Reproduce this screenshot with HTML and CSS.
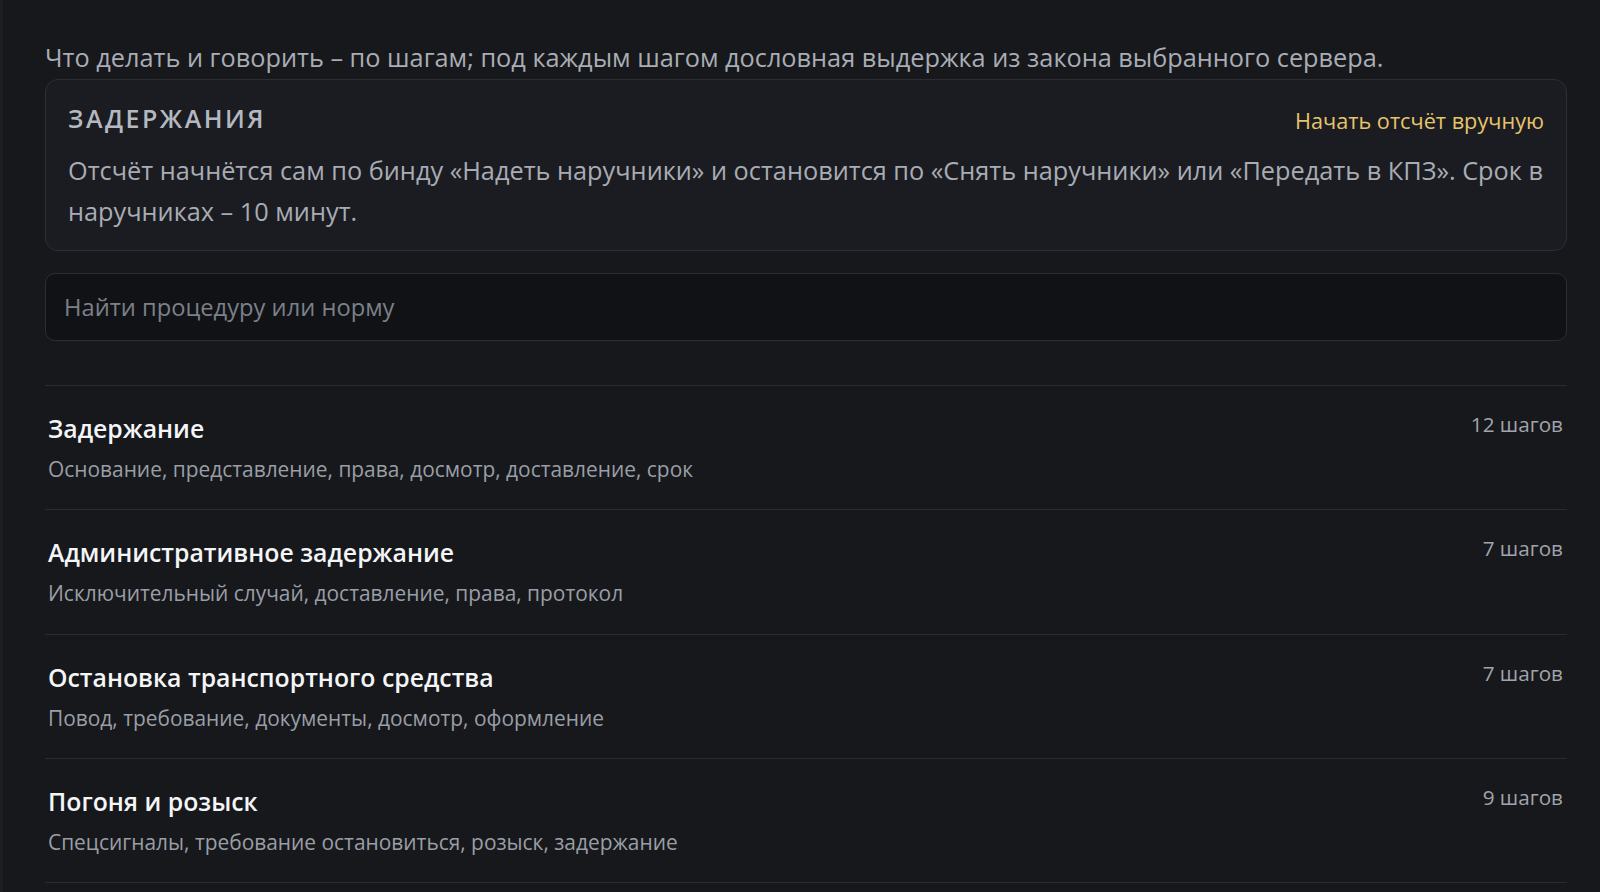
FILE: index.html
```html
<!DOCTYPE html>
<html lang="ru">
<head>
<meta charset="utf-8">
<title>Процедуры</title>
<link rel="stylesheet" href="styles.css">
</head>
<body>
<div class="app">
  <div class="edge"></div>
  <main class="main">
    <p class="intro">Что делать и говорить – по шагам; под каждым шагом дословная выдержка из закона выбранного сервера.</p>
    <section class="card">
      <div class="card-head">
        <h2 class="card-title">Задержания</h2>
        <a class="card-link" href="#">Начать отсчёт вручную</a>
      </div>
      <p class="card-text">Отсчёт начнётся сам по бинду «Надеть наручники» и остановится по «Снять наручники» или «Передать в КПЗ». Срок в наручниках – 10 минут.</p>
    </section>
    <input class="search" type="text" placeholder="Найти процедуру или норму">
    <ul class="list">
      <li class="item">
        <div class="item-body">
          <div class="item-title">Задержание</div>
          <div class="item-sub">Основание, представление, права, досмотр, доставление, срок</div>
        </div>
        <div class="item-count">12 шагов</div>
      </li>
      <li class="item">
        <div class="item-body">
          <div class="item-title">Административное задержание</div>
          <div class="item-sub">Исключительный случай, доставление, права, протокол</div>
        </div>
        <div class="item-count">7 шагов</div>
      </li>
      <li class="item">
        <div class="item-body">
          <div class="item-title">Остановка транспортного средства</div>
          <div class="item-sub">Повод, требование, документы, досмотр, оформление</div>
        </div>
        <div class="item-count">7 шагов</div>
      </li>
      <li class="item">
        <div class="item-body">
          <div class="item-title">Погоня и розыск</div>
          <div class="item-sub">Спецсигналы, требование остановиться, розыск, задержание</div>
        </div>
        <div class="item-count">9 шагов</div>
      </li>
    </ul>
  </main>
</div>
</body>
</html>
```
FILE: styles.css
```css
html, body {
  margin: 0;
  padding: 0;
  background: #17181c;
  height: 100%;
  overflow: hidden;
}
body {
  font-family: "Open Sans", "Noto Sans", "DejaVu Sans", sans-serif;
  color: #a9adb5;
}
.app {
  display: flex;
  min-height: 100%;
}
.edge {
  width: 3px;
  flex: none;
  background: #1d1e23;
}
.main {
  flex: 1;
  padding: 41px 33px 0 42px;
  display: flex;
  flex-direction: column;
}
.intro {
  margin: 0 0 6px;
  font-size: 25.3px;
  line-height: 32px;
  color: #a9adb5;
}
.card {
  background: #1b1c21;
  border: 1px solid #2c2e34;
  border-radius: 13px;
  padding: 22px 22px 18px 22px;
}
.card-head {
  display: flex;
  justify-content: space-between;
  align-items: baseline;
}
.card-title {
  margin: 0;
  font-size: 25px;
  line-height: 32px;
  font-weight: 600;
  text-transform: uppercase;
  letter-spacing: 0.1em;
  color: #b4b8c0;
}
.card-link {
  font-size: 21.7px;
  color: #e7c46b;
  text-decoration: none;
  position: relative;
  top: 1px;
}
.card-text {
  margin: 16px 0 0;
  font-size: 25.3px;
  line-height: 41px;
  color: #a8acb4;
}
.search {
  margin-top: 22px;
  height: 68px;
  box-sizing: border-box;
  background: #111216;
  border: 1px solid #2c2e34;
  border-radius: 10px;
  padding: 0 18px;
  font-family: inherit;
  font-size: 23.7px;
  color: #d0d3d8;
  outline: none;
}
.search::placeholder {
  color: #7b8089;
}
.list {
  list-style: none;
  margin: 44px 0 0;
  padding: 0;
  border-top: 1px solid #2a2c31;
}
.item {
  display: flex;
  justify-content: space-between;
  align-items: flex-start;
  padding: 26px 4px 26.3px 3px;
  border-bottom: 1px solid #2a2c31;
}
.item-title {
  font-size: 24.8px;
  line-height: 32px;
  font-weight: 600;
  color: #f4f5f7;
}
.item-sub {
  margin-top: 11px;
  font-size: 20.9px;
  line-height: 28px;
  color: #9a9ea6;
}
.item-count {
  margin-top: -2px;
  font-size: 20.7px;
  line-height: 28px;
  color: #a0a4ab;
}
```
